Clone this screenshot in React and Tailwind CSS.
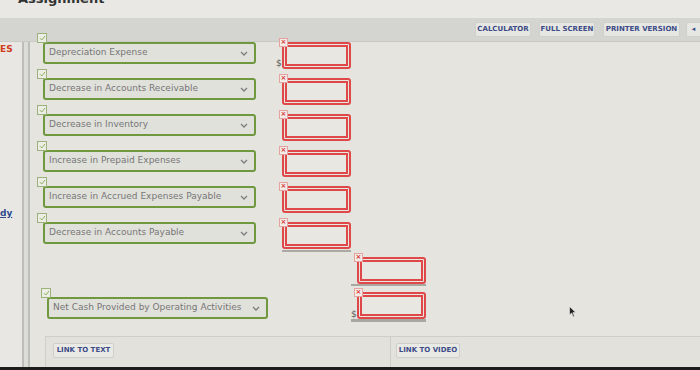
import React from "react";

const rows = [
  "Depreciation Expense",
  "Decrease in Accounts Receivable",
  "Decrease in Inventory",
  "Increase in Prepaid Expenses",
  "Increase in Accrued Expenses Payable",
  "Decrease in Accounts Payable",
];

const Check = () => (
  <span className="absolute -top-[9px] -left-[6px] w-[10px] h-[10px] bg-[#eceee6] border border-[#9bb27a] flex items-center justify-center">
    <svg width="7" height="6" viewBox="0 0 7 6">
      <path d="M1 3.2 L2.8 5 L6 1" fill="none" stroke="#8fae62" strokeWidth="1" />
    </svg>
  </span>
);

const Chevron = () => (
  <svg width="8" height="5" viewBox="0 0 8 5" className="shrink-0">
    <path d="M1 1 L4 4 L7 1" fill="none" stroke="#7c7c7c" strokeWidth="1.3" />
  </svg>
);

const Select = ({ label, width = "w-[213px]" }) => (
  <div className={`relative ${width} h-[22px]`}>
    <Check />
    <div className="h-full flex items-center justify-between pl-[4px] pr-[6px] bg-[#e1e1dc] border-2 border-[#6f983f] rounded-[3px]">
      <span className="text-[9px] text-[#767676] whitespace-nowrap">{label}</span>
      <Chevron />
    </div>
  </div>
);

const RedBox = () => (
  <div className="relative w-[69px] h-[27px]">
    <span className="absolute -top-[4px] -left-[3px] z-10 w-[9px] h-[9px] bg-[#f3ebe8] border border-[#e4a3a0] flex items-center justify-center text-[7px] leading-none font-bold text-[#d8393c]">
      ×
    </span>
    <div className="h-full border-[5px] border-double border-[#df4749] rounded-[3px] bg-[#e8e7e2]" />
  </div>
);

const ToolButton = ({ children, className = "" }) => (
  <div className={`h-[15px] flex items-center justify-center bg-[#e6e6e3] border border-[#cfcfcc] rounded-[2px] text-[7px] font-bold text-[#3d4c86] whitespace-nowrap ${className}`}>
    {children}
  </div>
);

export default function App() {
  return (
    <div
      className="relative w-[700px] h-[370px] overflow-hidden bg-[#e5e4df] flex flex-col"
      style={{ fontFamily: '"DejaVu Sans", Verdana, sans-serif' }}
    >
      {/* top strip */}
      <div className="h-[18px] bg-[#e9e8e4] overflow-hidden pl-[18px]">
        <div className="-mt-[11px] text-[13px] font-bold text-[#333]">Assignment</div>
      </div>

      {/* toolbar */}
      <div className="h-[24px] bg-[#d4d4d0] border-b border-[#c9c9c5] flex items-center justify-end">
        <ToolButton className="w-[56px]">CALCULATOR</ToolButton>
        <ToolButton className="w-[56px] ml-[8px]">FULL SCREEN</ToolButton>
        <ToolButton className="w-[77px] ml-[8px]">PRINTER VERSION</ToolButton>
        <ToolButton className="w-[14px] ml-[6px] rounded-r-none border-r-0">◂</ToolButton>
      </div>

      <div className="flex flex-1">
        {/* left sidebar */}
        <div className="w-[22px] flex flex-col bg-[#e8e7e3]">
          <div className="mt-[1px] text-[9px] font-bold text-[#d13c1d]">ES</div>
          <div className="mt-[150px] text-[9px] font-bold text-[#2e4b8e] underline">dy</div>
        </div>
        <div className="w-[8px] border-x-2 border-[#bdbdb9] bg-[#dcdcd8]" />

        {/* content */}
        <div className="flex-1 flex flex-col">
          <div className="flex flex-col">
            {rows.map((label, i) => (
              <div key={label} className="h-[36px] flex items-start">
                <div className="ml-[13px]">
                  <Select label={label} />
                </div>
                <div className="relative ml-[20px] flex items-start">
                  <span className="w-[6px] mt-[17px] text-[9px] text-[#555] leading-none">{i === 0 ? "$" : ""}</span>
                  <div className={i === rows.length - 1 ? "border-b-2 border-[#aaa9a4] pb-[1px]" : ""}>
                    <RedBox />
                  </div>
                </div>
              </div>
            ))}
          </div>

          {/* total block */}
          <div className="flex items-end mt-[-1px]">
            <div className="w-[321px] pl-[17px] pb-[3px]">
              <Select label="Net Cash Provided by Operating Activities" width="w-[221px]" />
            </div>
            <div className="flex flex-col gap-[6px]">
              <div className="pl-[6px] border-b-2 border-[#a8a7a2]">
                <RedBox />
              </div>
              <div className="flex items-end border-b-[3px] border-[#a8a7a2]">
                <span className="w-[6px] text-[9px] text-[#555] leading-none">$</span>
                <RedBox />
              </div>
            </div>
          </div>

          {/* bottom links */}
          <div className="mt-auto ml-[15px] h-[31px] flex border-t border-l border-[#cfcfca] bg-[#e2e1dc]">
            <div className="w-[345px] border-r border-[#cfcfca] pl-[7px] pt-[6px]">
              <ToolButton className="w-[61px] bg-[#e9e9e6]">LINK TO TEXT</ToolButton>
            </div>
            <div className="pl-[5px] pt-[6px]">
              <ToolButton className="w-[64px] bg-[#e9e9e6]">LINK TO VIDEO</ToolButton>
            </div>
          </div>
          <div className="h-[3px] bg-[#1d1d1d] -ml-[30px]" />
        </div>
      </div>

      {/* mouse cursor */}
      <svg className="absolute left-[569px] top-[306px]" width="8" height="12" viewBox="0 0 8 12">
        <path d="M0.5 0.5 L0.5 9 L2.6 7 L4.2 10.8 L5.4 10.3 L3.9 6.6 L6.8 6.6 Z" fill="#222" stroke="#eee" strokeWidth="0.6" />
      </svg>
    </div>
  );
}
